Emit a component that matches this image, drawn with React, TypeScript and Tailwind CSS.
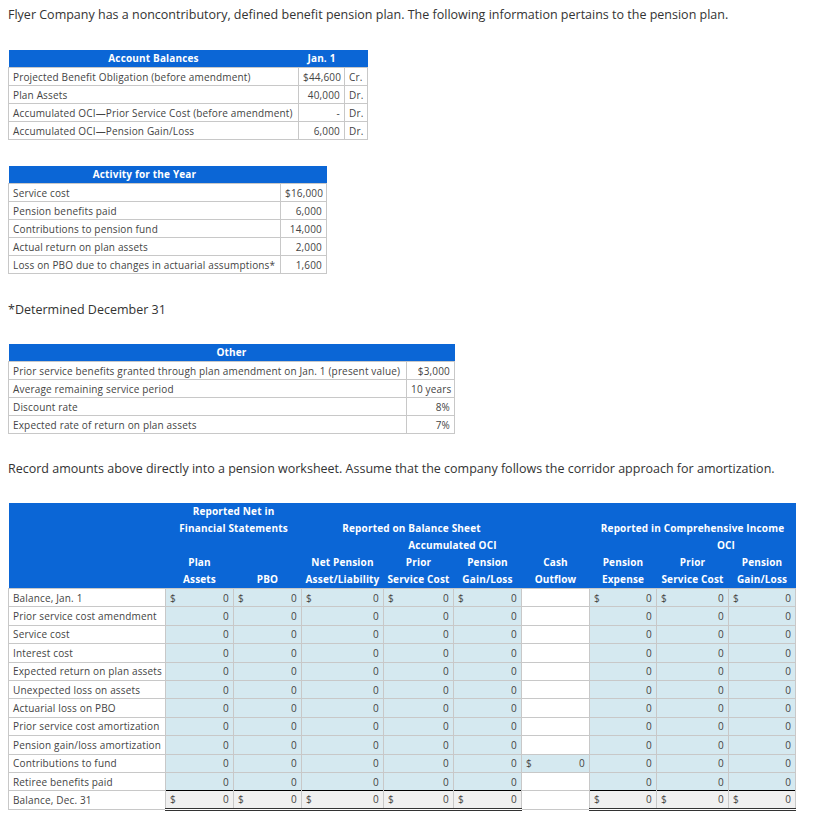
import React from 'react';

const blue = 'bg-[#0b66d6]';

const balances = [
  ['Projected Benefit Obligation (before amendment)', '$44,600', 'Cr.'],
  ['Plan Assets', '40,000', 'Dr.'],
  ['Accumulated OCI\u2014Prior Service Cost (before amendment)', '-', 'Dr.'],
  ['Accumulated OCI\u2014Pension Gain/Loss', '6,000', 'Dr.'],
];

const activity = [
  ['Service cost', '$16,000'],
  ['Pension benefits paid', '6,000'],
  ['Contributions to pension fund', '14,000'],
  ['Actual return on plan assets', '2,000'],
  ['Loss on PBO due to changes in actuarial assumptions*', '1,600'],
];

const other = [
  ['Prior service benefits granted through plan amendment on Jan. 1 (present value)', '$3,000'],
  ['Average remaining service period', '10 years'],
  ['Discount rate', '8%'],
  ['Expected rate of return on plan assets', '7%'],
];

const rows = [
  'Balance, Jan. 1',
  'Prior service cost amendment',
  'Service cost',
  'Interest cost',
  'Expected return on plan assets',
  'Unexpected loss on assets',
  'Actuarial loss on PBO',
  'Prior service cost amortization',
  'Pension gain/loss amortization',
  'Contributions to fund',
  'Retiree benefits paid',
  'Balance, Dec. 31',
];

const td = 'border border-[#c8c8c8] px-[4px] h-[18px] leading-[16px] whitespace-nowrap';
const wtd = 'border border-[#c8c8c8] px-[4px] h-[18.4px] leading-[16px] whitespace-nowrap';
const th = 'font-bold text-white text-center h-[17px] leading-[17px] px-[2px] whitespace-nowrap';

function Money({ dollar }: { dollar: boolean }) {
  return (
    <div className="flex justify-between">
      <span>{dollar ? '$' : ''}</span>
      <span>0</span>
    </div>
  );
}

export default function App() {
  return (
    <div className="bg-white text-[#333] px-[8px] pt-[5px] pb-6 min-h-screen" style={{ fontFamily: '"Open Sans", sans-serif' }}>
      <p className="text-[12.5px] leading-[20px]">
        Flyer Company has a noncontributory, defined benefit pension plan. The following information pertains to the pension plan.
      </p>

      {/* Account balances */}
      <table className="mt-[25px] border-collapse table-fixed w-[359px] text-[10px] tracking-[0.16px] text-[#444]">
        <colgroup>
          <col className="w-[290px]" />
          <col className="w-[46px]" />
          <col className="w-[23px]" />
        </colgroup>
        <thead>
          <tr className={blue}>
            <th className={th}>Account Balances</th>
            <th className={th}>Jan. 1</th>
            <th className={th}></th>
          </tr>
        </thead>
        <tbody>
          {balances.map(([a, b, c]) => (
            <tr key={a}>
              <td className={td}>{a}</td>
              <td className={`${td} text-right`}>{b}</td>
              <td className={`${td} px-[3px]`}>{c}</td>
            </tr>
          ))}
        </tbody>
      </table>

      {/* Activity */}
      <table className="mt-[26px] border-collapse table-fixed w-[318px] text-[10px] tracking-[0.16px] text-[#444]">
        <colgroup>
          <col className="w-[272px]" />
          <col className="w-[46px]" />
        </colgroup>
        <thead>
          <tr className={blue}>
            <th className={th}>Activity for the Year</th>
            <th className={th}></th>
          </tr>
        </thead>
        <tbody>
          {activity.map(([a, b]) => (
            <tr key={a}>
              <td className={`${td} h-[18.4px]`}>{a}</td>
              <td className={`${td} h-[18.4px] text-right`}>{b}</td>
            </tr>
          ))}
        </tbody>
      </table>

      <p className="mt-[26px] text-[12.5px] leading-[20px]">*Determined December 31</p>

      {/* Other */}
      <table className="mt-[24px] border-collapse table-fixed w-[446px] text-[10px] tracking-[0.16px] text-[#444]">
        <colgroup>
          <col className="w-[398px]" />
          <col className="w-[48px]" />
        </colgroup>
        <thead>
          <tr className={blue}>
            <th className={th} colSpan={2}>Other</th>
          </tr>
        </thead>
        <tbody>
          {other.map(([a, b]) => (
            <tr key={a}>
              <td className={td}>{a}</td>
              <td className={`${td} text-right`}>{b}</td>
            </tr>
          ))}
        </tbody>
      </table>

      <p className="mt-[25px] text-[12.5px] leading-[20px]">
        Record amounts above directly into a pension worksheet. Assume that the company follows the corridor approach for amortization.
      </p>

      {/* Worksheet */}
      <table className="mt-[24px] border-collapse table-fixed w-[787px] text-[10px] tracking-[0.16px] text-[#444]">
        <colgroup>
          <col className="w-[157px]" />
          <col className="w-[68px]" />
          <col className="w-[68px]" />
          <col className="w-[82px]" />
          <col className="w-[70px]" />
          <col className="w-[68px]" />
          <col className="w-[68px]" />
          <col className="w-[67px]" />
          <col className="w-[72px]" />
          <col className="w-[67px]" />
        </colgroup>
        <thead className={blue}>
          <tr>
            <th className={th} rowSpan={5}></th>
            <th className={th} colSpan={2}>Reported Net in</th>
            <th className={th} colSpan={7}></th>
          </tr>
          <tr>
            <th className={th} colSpan={2}>Financial Statements</th>
            <th className={th} colSpan={3}>Reported on Balance Sheet</th>
            <th className={th}></th>
            <th className={th} colSpan={3}>Reported in Comprehensive Income</th>
          </tr>
          <tr>
            <th className={th} colSpan={3}></th>
            <th className={th} colSpan={2}>Accumulated OCI</th>
            <th className={th} colSpan={2}></th>
            <th className={th} colSpan={2}>OCI</th>
          </tr>
          <tr>
            <th className={th}>Plan</th>
            <th className={th}></th>
            <th className={th}>Net Pension</th>
            <th className={th}>Prior</th>
            <th className={th}>Pension</th>
            <th className={th}>Cash</th>
            <th className={th}>Pension</th>
            <th className={th}>Prior</th>
            <th className={th}>Pension</th>
          </tr>
          <tr>
            <th className={th}>Assets</th>
            <th className={th}>PBO</th>
            <th className={th}>Asset/Liability</th>
            <th className={th}>Service Cost</th>
            <th className={th}>Gain/Loss</th>
            <th className={th}>Outflow</th>
            <th className={th}>Expense</th>
            <th className={th}>Service Cost</th>
            <th className={th}>Gain/Loss</th>
          </tr>
        </thead>
        <tbody>
          {rows.map((label, i) => {
            const first = i === 0;
            const last = i === rows.length - 1;
            const beforeLast = i === rows.length - 2;
            const contrib = label === 'Contributions to fund';
            const num = last
              ? `${wtd} bg-[#f0f0f0] border-t-black border-b-[3px] border-b-[#333] [border-bottom-style:double]`
              : beforeLast
                ? `${wtd} bg-[#d5e9f0] border-b-0`
                : `${wtd} bg-[#d5e9f0]`;
            const cash = contrib ? `${wtd} bg-[#d5e9f0]` : `${wtd} bg-white`;
            return (
              <tr key={label}>
                <td className={wtd}>{label}</td>
                {[0, 1, 2, 3, 4].map((k) => (
                  <td key={k} className={num}>
                    <Money dollar={first || last} />
                  </td>
                ))}
                <td className={cash}>{contrib ? <Money dollar /> : null}</td>
                {[5, 6, 7].map((k) => (
                  <td key={k} className={num}>
                    <Money dollar={first || last} />
                  </td>
                ))}
              </tr>
            );
          })}
        </tbody>
      </table>
    </div>
  );
}
